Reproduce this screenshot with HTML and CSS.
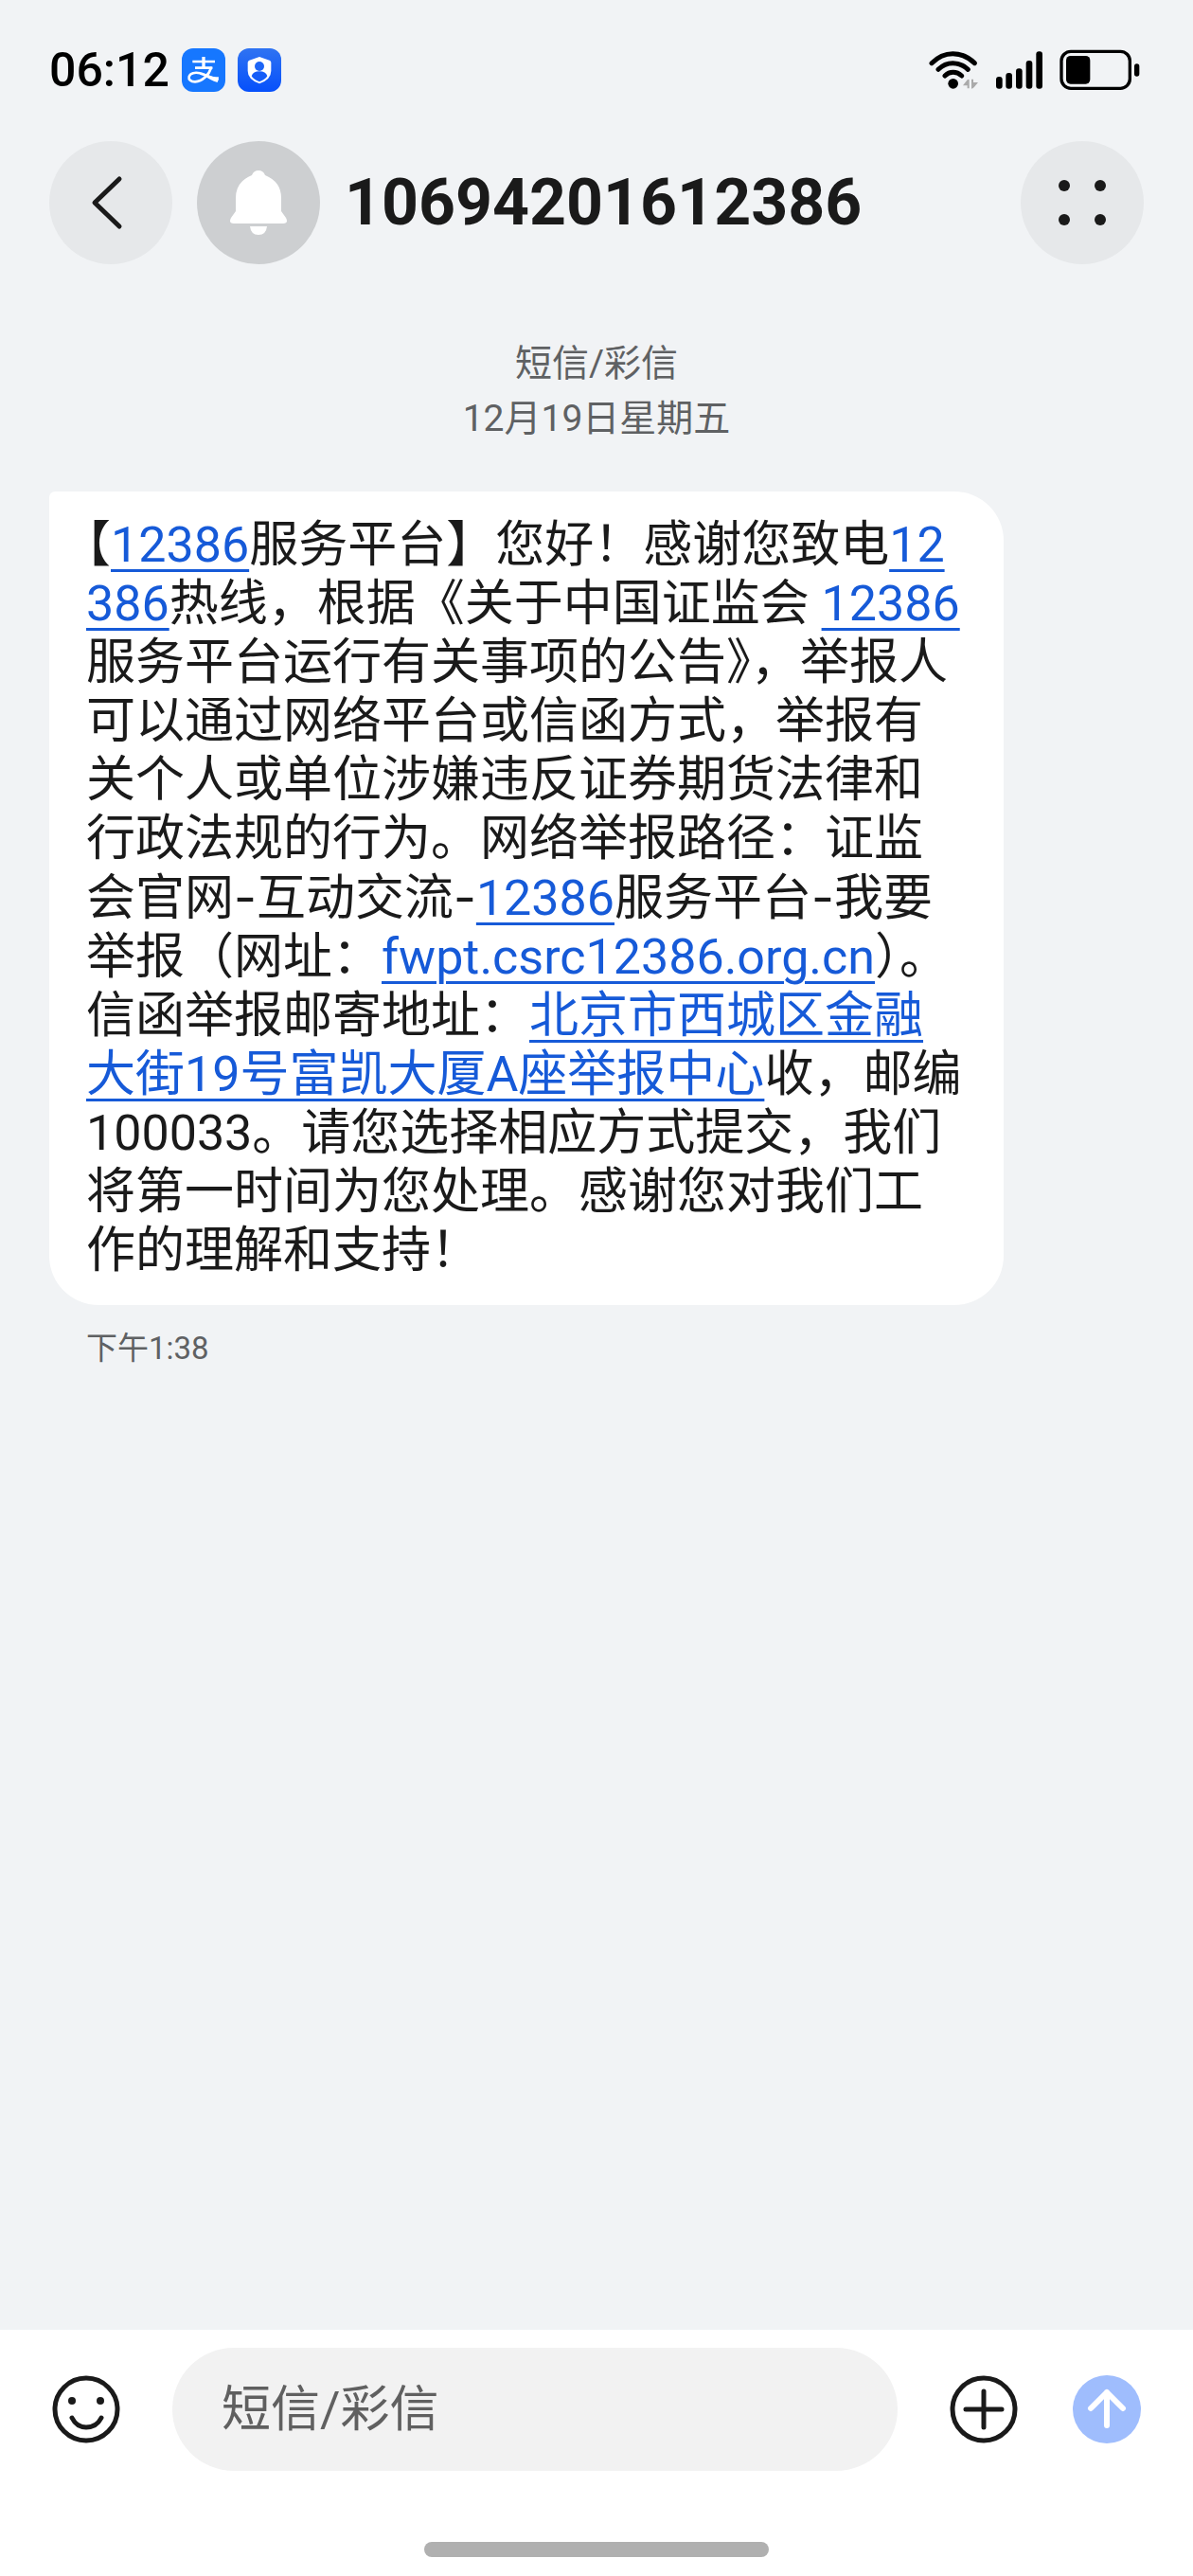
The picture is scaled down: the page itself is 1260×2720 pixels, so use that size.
FILE: index.html
```html
<!DOCTYPE html>
<html lang="zh-CN">
<head>
    <meta charset="UTF-8">
    <meta name="viewport" content="width=device-width, initial-scale=1.0">
    <title>10694201612386</title>
    <link rel="stylesheet" href="styles.css">
</head>
<body>
    <div class="status-bar">
        <span class="clock">06:12</span>
        <svg class="app-icon" viewBox="0 0 138 138" aria-hidden="true">
            <rect width="138" height="138" rx="36" fill="#1677ff"/>
            <g fill="none" stroke="#fff">
                <path d="M34 42H105M42 62H97" stroke-width="8"/>
                <path d="M69 27V62" stroke-width="10"/>
                <path d="M94 60C86 84 66 105 42 106C28 106 21 99 23 90C26 78 43 75 58 79C75 83 92 95 116 99" stroke-width="8"/>
            </g>
            <path d="M74 80C90 89 104 91 117 91L113 108C98 103 83 96 70 86Z" fill="#fff"/>
        </svg>
        <svg class="app-icon" viewBox="0 0 138 138" aria-hidden="true">
            <defs>
                <linearGradient id="shield-bg" x1="0" y1="0" x2="0" y2="1">
                    <stop offset="0" stop-color="#2f73f2"/>
                    <stop offset="1" stop-color="#0650fb"/>
                </linearGradient>
            </defs>
            <rect width="138" height="138" rx="36" fill="url(#shield-bg)"/>
            <path d="M69 27L101 38Q106 40 106 45V72Q106 99 69 112Q32 99 32 72V45Q32 40 37 38Z" fill="#fff"/>
            <circle cx="69" cy="57" r="15" fill="#1d65f6"/>
            <path d="M44 88Q49 73 69 73Q89 73 94 88Q88 99 69 106Q50 99 44 88Z" fill="#155df8"/>
        </svg>
        <div class="status-right">
            <svg class="wifi" viewBox="62 66 159 132" aria-hidden="true">
                <g fill="none" stroke="#000" stroke-width="15" stroke-linecap="round">
                    <path d="M71 110Q101 80 138 80Q176 80 207 110"/>
                    <path d="M92 130Q112 110 138 110Q165 110 186 130"/>
                    <path d="M113 150Q124 139 139 139Q154 139 166 150"/>
                </g>
                <circle cx="139" cy="175" r="16"/>
                <path d="M170 181L184 163Q190 158 190 165V190H184V181ZM197 190V161H203V171H218L205 187Q197 194 197 190Z" fill="#aaa"/>
            </svg>
            <svg class="signal" viewBox="285 66 147 132" aria-hidden="true">
                <rect x="285" y="153" width="20" height="38" rx="9"/>
                <rect x="316" y="141" width="20" height="50" rx="9"/>
                <rect x="348" y="127" width="20" height="64" rx="9"/>
                <rect x="380" y="102" width="20" height="89" rx="9"/>
                <rect x="412" y="73" width="20" height="118" rx="9"/>
            </svg>
            <svg class="battery" viewBox="477 66 255 132" aria-hidden="true">
                <rect x="483" y="73" width="217" height="117" rx="30" fill="none" stroke="#000" stroke-width="10"/>
                <rect x="498" y="87" width="76" height="89" rx="14"/>
                <rect x="714" y="112" width="16" height="40" rx="8"/>
            </svg>
        </div>
    </div>

    <header class="header">
        <button class="round-button" type="button" aria-label="返回">
            <svg viewBox="0 0 130 130">
                <path d="M74 40L48 65L74 90" fill="none" stroke="#1a1a1a" stroke-width="5" stroke-linecap="round" stroke-linejoin="round"/>
            </svg>
        </button>
        <div class="avatar">
            <svg viewBox="0 0 130 130" aria-hidden="true">
                <path d="M65 31Q70 31 72 36Q89 43 89 60V74L94 81Q97 87 91 87H39Q33 87 36 81L41 74V60Q41 43 58 36Q60 31 65 31ZM56 90H74Q73 99 65 99Q57 99 56 90Z" fill="#fff"/>
            </svg>
        </div>
        <h1 class="title">10694201612386</h1>
        <button class="round-button" type="button" aria-label="更多">
            <svg viewBox="0 0 130 130" fill="#1a1a1a">
                <circle cx="46" cy="47" r="6"/>
                <circle cx="84" cy="47" r="6"/>
                <circle cx="46" cy="83" r="6"/>
                <circle cx="84" cy="83" r="6"/>
            </svg>
        </button>
    </header>

    <main class="chat">
        <div class="day">
            <p>短信/彩信</p>
            <p>12月19日星期五</p>
        </div>
        <p class="bubble">【<a href="tel:12386">12386</a>服务平台】您好！感谢您致电<a href="tel:12386">12386</a>热线，根据《关于中国证监会 <a href="tel:12386">12386</a>服务平台运行有关事项的公告》，举报人可以通过网络平台或信函方式，举报有关个人或单位涉嫌违反证券期货法律和行政法规的行为。网络举报路径：证监会官网<span class="dash">-</span>互动交流<span class="dash">-</span><a href="tel:12386">12386</a>服务平台<span class="dash">-</span>我要举报（网址：<a href="#site">fwpt.csrc12386.org.cn</a>）。信函举报邮寄地址：<a href="#map">北京市西城区金融大街19号富凯大厦A座举报中心</a>收，邮编100033。请您选择相应方式提交，我们将第一时间为您处理。感谢您对我们工作的理解和支持！</p>
        <p class="time">下午1:38</p>
    </main>

    <footer class="footer">
        <form class="composer">
            <button class="icon-button" type="button" aria-label="表情">
                <svg viewBox="0 0 78 78">
                    <circle cx="39" cy="39" r="33" fill="none" stroke="#1a1a1a" stroke-width="5"/>
                    <circle cx="24" cy="30" r="4" fill="#1a1a1a"/>
                    <circle cx="54" cy="30" r="4" fill="#1a1a1a"/>
                    <path d="M24 48Q29 58 39 58Q50 58 55 48" fill="none" stroke="#1a1a1a" stroke-width="5" stroke-linecap="round"/>
                </svg>
            </button>
            <input class="message-input" type="text" placeholder="短信/彩信" aria-label="短信/彩信">
            <button class="icon-button" type="button" aria-label="添加">
                <svg viewBox="0 0 78 78" fill="none" stroke="#1a1a1a" stroke-width="5" stroke-linecap="round">
                    <circle cx="39" cy="39" r="33"/>
                    <path d="M39 20V58M20 39H58"/>
                </svg>
            </button>
            <button class="icon-button" type="submit" aria-label="发送">
                <svg viewBox="0 0 78 78">
                    <circle cx="39" cy="39" r="36" fill="#9fbdfd"/>
                    <path d="M39 56V21M22 38L39 21L56 38" fill="none" stroke="#fff" stroke-width="6" stroke-linecap="round" stroke-linejoin="round"/>
                </svg>
            </button>
        </form>
        <div class="home-bar"></div>
    </footer>
</body>
</html>
```

FILE: styles.css
```css
* {
    box-sizing: border-box;
    margin: 0;
    padding: 0;
}
body {
    display: flex;
    flex-direction: column;
    min-height: 100vh;
    background-color: #f1f3f5;
    color: #1a1a1a;
    font-family: Roboto, "Noto Sans CJK SC", sans-serif;
}
button {
    border: none;
    background: none;
    cursor: pointer;
}
svg {
    display: block;
}

/* status bar */
.status-bar {
    display: flex;
    align-items: center;
    gap: 13px;
    height: 149px;
    padding: 0 56px 2px 52px;
    color: #000;
}
.clock {
    font-size: 50px;
    font-weight: 500;
    line-height: 62px;
}
.app-icon {
    width: 46px;
    height: 46px;
}
.status-right {
    display: flex;
    align-items: center;
    gap: 18px;
    margin-left: auto;
}
.wifi,
.signal,
.battery {
    height: 44px;
}

/* header */
.header {
    display: flex;
    align-items: center;
    gap: 26px;
    padding: 0 52px;
}
.round-button,
.avatar {
    flex: none;
    width: 130px;
    height: 130px;
    border-radius: 50%;
}
.round-button {
    background-color: #e6e8ea;
}
.avatar {
    background-color: #cdcfd1;
}
.title {
    flex: 1;
    font-size: 68px;
    font-weight: 700;
}

/* conversation */
.chat {
    flex: 1;
    padding: 76px 52px 52px;
}
.day {
    color: #5f6163;
    font-size: 39px;
    line-height: 58px;
    text-align: center;
}
.bubble {
    max-width: 1008px;
    margin-top: 48px;
    padding: 26px 39px;
    border-radius: 6px 52px 52px 52px;
    background-color: #fff;
    font-size: 52px;
    line-height: 62px;
    word-break: break-all;
    text-spacing-trim: trim-start;
}
.bubble a {
    color: #165ad8;
    text-decoration-thickness: 3px;
    text-underline-offset: 8px;
}
.dash {
    font-family: Inter, sans-serif;
}
.time {
    margin-top: 24px;
    padding: 0 39px;
    color: #5f6163;
    font-size: 33px;
    line-height: 44px;
}

/* message box */
.footer {
    padding: 19px 52px 20px;
    background-color: #fff;
}
.composer {
    display: flex;
    align-items: center;
    gap: 52px;
}
.icon-button {
    flex: none;
    width: 78px;
    height: 78px;
}
.message-input {
    flex: 1;
    min-width: 0;
    height: 130px;
    padding: 0 52px;
    border: none;
    border-radius: 65px;
    outline: none;
    background-color: #f2f2f2;
    color: #1a1a1a;
    font-family: inherit;
    font-size: 52px;
}
.message-input::placeholder {
    color: #606060;
}
.home-bar {
    width: 364px;
    height: 16px;
    margin: 75px auto 0;
    border-radius: 8px;
    background-color: #b0b0b0;
}
```
